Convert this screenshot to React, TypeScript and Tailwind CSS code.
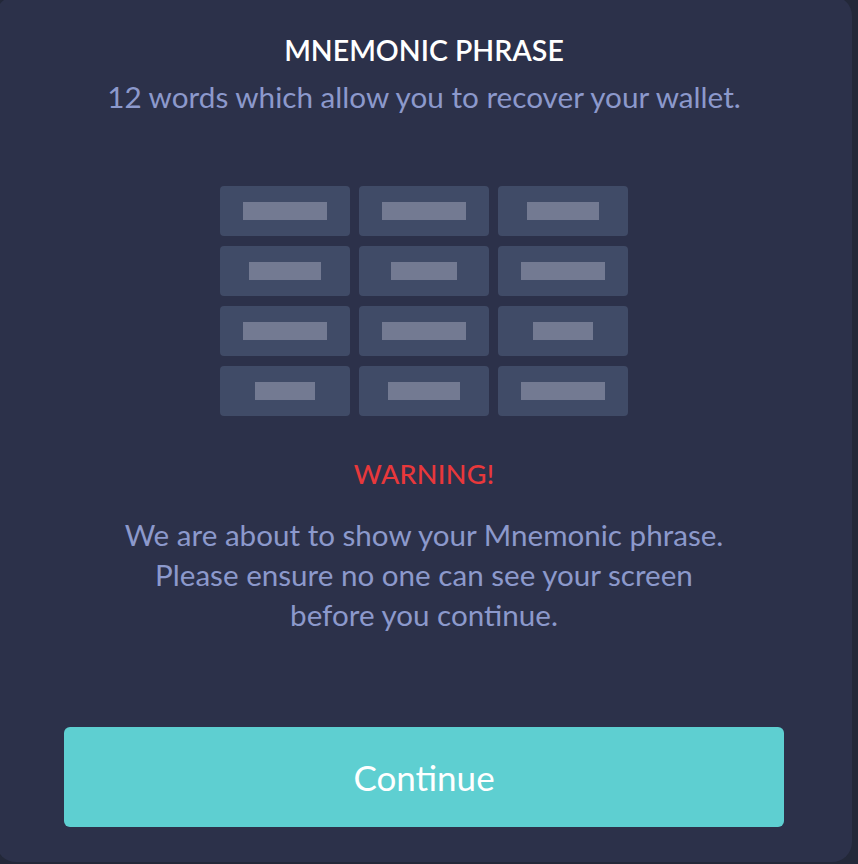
const bars = [
  [84, 84, 72],
  [72, 66, 84],
  [84, 84, 60],
  [60, 72, 84],
];

export default function App() {
  return (
    <div className="min-h-screen w-full overflow-hidden bg-[#232839]" style={{ fontFamily: "Lato, 'Open Sans', sans-serif" }}>
      <div className="-ml-[4px] -mt-[4px] flex h-[866px] w-[856px] flex-col items-center rounded-[20px] bg-[#2c314a] pt-[4px]">
        <h1 className="mt-[32px] h-[36px] text-[28.5px] font-semibold leading-[36px] text-white">
          MNEMONIC PHRASE
        </h1>
        <p className="mt-[9px] text-[29.7px] leading-[40px] text-[#8c99cc]">
          12 words which allow you to recover your wallet.
        </p>

        <div className="mt-[69px] grid grid-cols-[130px_130px_130px] gap-x-[9px] gap-y-[10px]">
          {bars.flat().map((w, i) => (
            <div key={i} className="flex h-[50px] items-center justify-center rounded-[4px] bg-[#404b67]">
              <div className="h-[18px] bg-[#737a92]" style={{ width: w }} />
            </div>
          ))}
        </div>

        <div className="mt-[38px] text-[27px] font-medium leading-[40px] tracking-[0.01em] text-[#e8383b]">WARNING!</div>
        <p className="mt-[21px] text-center text-[29.6px] leading-[40px] text-[#8c99cc]">
          We are about to show your Mnemonic phrase.
          <br />
          Please ensure no one can see your screen
          <br />
          before you continue.
        </p>

        <button className="mt-[92px] flex h-[100px] w-[720px] items-center justify-center rounded-[6px] bg-[#5ecfd1] text-[35px] text-white">
          Continue
        </button>
      </div>
    </div>
  );
}
